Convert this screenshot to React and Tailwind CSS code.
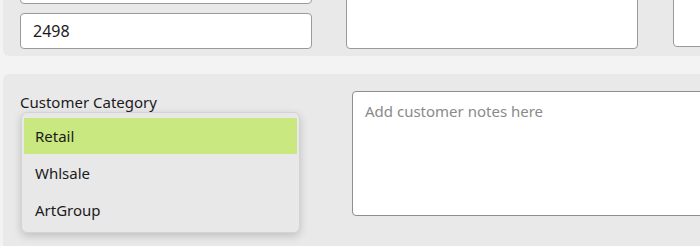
const font = { fontFamily: '"Noto Sans", "Open Sans", sans-serif' };

const categories = ['Retail', 'Whlsale', 'ArtGroup'];

export default function App() {
  return (
    <div
      className="w-[700px] h-[246px] overflow-hidden bg-[#f3f3f3] text-[#1b1b1b]"
      style={font}
    >
      {/* Top panel (cut off by the window) */}
      <div className="ml-[3px] -mt-[40px] w-[760px] rounded-b-[6px] bg-[#e9e9e9] pl-[17px] pt-[8px] pb-[7px] flex">
        <div className="flex-none w-[292px] flex flex-col gap-[9px]">
          <div className="h-[36px] rounded-[4px] border border-[#9a9a9a] bg-white" />
          <div className="h-[36px] rounded-[4px] border border-[#9a9a9a] bg-white px-[12px] flex items-center text-[16px]">
            2498
          </div>
        </div>
        <div className="flex-none ml-[34px] w-[292px] self-end h-[60px] rounded-[4px] border border-[#9a9a9a] bg-white" />
        <div className="flex-none ml-[35px] w-[60px] self-end mb-[2px] h-[60px] rounded-[4px] border border-[#9a9a9a] bg-white" />
      </div>

      {/* Bottom panel */}
      <div className="mt-[18px] ml-[3px] w-[720px] h-[200px] rounded-t-[6px] bg-[#e9e9e9] pl-[17px] pt-[17px] flex">
        <div className="relative flex-none w-[291px]">
          <div className="text-[15px] leading-[20px] pt-[1px]">Customer Category</div>
          <div className="absolute left-[1px] top-[21px] w-[279px] rounded-[6px] border border-[#d4d4d4] bg-[#e8e8e8] shadow-[0_3px_8px_rgba(0,0,0,0.18)] px-[1px] pt-[5px] pb-[3px]">
            {categories.map((c, i) => (
              <div
                key={c}
                className={`h-[36px] mx-[1px] flex items-center px-[11px] text-[15px] mb-[1px] ${
                  i === 0 ? 'bg-[#c9e87f]' : ''
                }`}
              >
                {c}
              </div>
            ))}
          </div>
        </div>
        <div className="flex-none ml-[41px] w-[360px] h-[125px] rounded-[4px] border border-[#8e8e8e] bg-white px-[12px] pt-[8px] text-[15px] text-[#8a8a8a]">
          Add customer notes here
        </div>
      </div>
    </div>
  );
}
